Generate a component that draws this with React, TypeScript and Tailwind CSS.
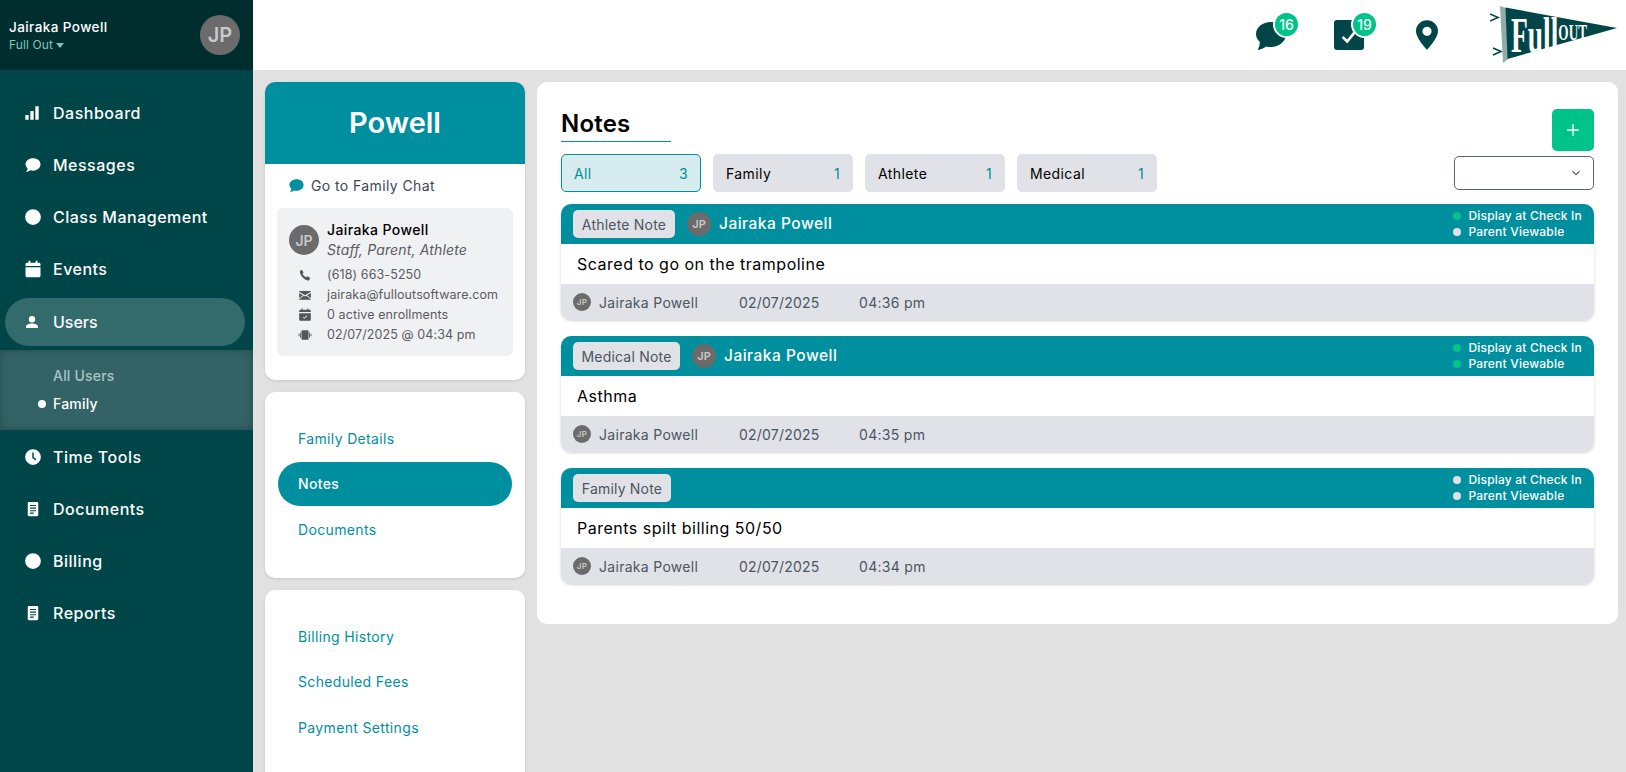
import React from "react";

const F = "font-['Inter','Noto_Sans',sans-serif]";

function Avatar({ size, text }: { size: string; text: string }) {
  return (
    <div className={`${size} flex shrink-0 items-center justify-center rounded-full bg-[#6b6b6b] font-semibold text-[#c9c9c9]`}>
      {text}
    </div>
  );
}

const I = ({ children, cls = "h-[18px] w-[18px]", box = "0 0 24 24" }: { children: React.ReactNode; cls?: string; box?: string }) => (
  <svg viewBox={box} className={`${cls} shrink-0`} fill="currentColor">{children}</svg>
);

const bubble = "M12 3C6.500 3 2 6.600 2 11c0 2.200 1.100 4.100 2.900 5.600-.2 1.700-1 3.200-2.200 4.400 2.300 0 4.400-.8 6-2 1 .3 2.200.5 3.300.5 5.500 0 10-3.600 10-8.500S17.500 3 12 3z";
const Doc = () => (
  <I>
    <path fillRule="evenodd" d="M6.500 2.500h11c.8 0 1.500.7 1.500 1.500v16c0 .8-.7 1.500-1.500 1.500h-11C5.700 21.500 5 20.800 5 20V4c0-.8.7-1.500 1.500-1.500zM8 6.500v1.500h8V6.500H8zm0 3.500v1.500h8V10H8zm0 3.500V15h8v-1.500H8zm0 3.300v1.400h5v-1.400H8z" />
  </I>
);

const items: { label: string; icon: React.ReactNode }[] = [
  { label: "Dashboard", icon: <I cls="h-[16px] w-[16px]"><path d="M2 15h5v7H2zM9.500 9h5v13h-5zM17 2h5v20h-5z" /></I> },
  { label: "Messages", icon: <I><path d={bubble} /></I> },
  { label: "Class Management", icon: <I><circle cx="12" cy="12" r="10.500" /></I> },
  { label: "Events", icon: <I><path d="M6 1h2.500v2.500h7V1H18v2.500h2c1.100 0 2 .9 2 2V8H2V5.500c0-1.100.9-2 2-2h2zM2 9.500h20V21c0 1.100-.9 2-2 2H4c-1.100 0-2-.9-2-2z" /></I> },
];
const items2: { label: string; icon: React.ReactNode }[] = [
  { label: "Time Tools", icon: <I><path fillRule="evenodd" d="M12 1.500a10.500 10.500 0 1 0 0 21 10.500 10.500 0 0 0 0-21zM11 6h2v6.200l3.500 2.600-1.200 1.600L11 13.200z" /></I> },
  { label: "Documents", icon: <Doc /> },
  { label: "Billing", icon: <I><circle cx="12" cy="12" r="10.500" /></I> },
  { label: "Reports", icon: <Doc /> },
];

function NavRow({ label, icon }: { label: string; icon: React.ReactNode }) {
  return (
    <div className="flex h-[52px] items-center pl-[24px] text-white">
      <span className="flex w-[29px]">{icon}</span>
      <span className="text-[16px] font-medium tracking-[0.5px]">{label}</span>
    </div>
  );
}

function Sidebar() {
  return (
    <aside className="flex h-[772px] w-[253px] shrink-0 flex-col bg-[#004548]">
      <div className="flex h-[70px] shrink-0 items-center justify-between bg-[#002e2f] pl-[9px] pr-[13px]">
        <div className="flex flex-col">
          <span className="text-[13.500px] font-medium leading-[20px] tracking-[0.42px] text-white">Jairaka Powell</span>
          <span className="flex items-center gap-[3px] text-[12px] leading-[16px] tracking-[0.1px] text-[#7fc4bd]">
            Full Out
            <span className="mt-[1px] h-0 w-0 border-x-[4.500px] border-t-[5px] border-x-transparent border-t-[#7fc4bd]" />
          </span>
        </div>
        <Avatar size="h-[40px] w-[40px] text-[20px]" text="JP" />
      </div>
      <nav className="flex flex-col pt-[17px]">
        {items.map((i) => <NavRow key={i.label} {...i} />)}
        <div className="ml-[5px] mr-[8px] mt-[3px] flex h-[48px] items-center rounded-[24px] bg-[#336a6c] pl-[19px] text-white">
          <span className="flex w-[29px]"><I cls="h-[16px] w-[16px]"><path d="M12 3a4.800 4.800 0 1 1 0 9.600A4.800 4.800 0 0 1 12 3zM3 21v-2c0-3 5-4.700 9-4.700s9 1.700 9 4.700v2z" /></I></span>
          <span className="text-[16px] font-medium">Users</span>
        </div>
        <div className="mt-[4px] flex h-[80px] flex-col justify-center bg-[#336366] pl-[53px] shadow-[inset_0_0_8px_rgba(0,0,0,0.25)]">
          <span className="text-[14px] font-medium leading-[28px] tracking-[0.2px] text-[#a9c3c3]">All Users</span>
          <span className="relative text-[14px] font-medium leading-[28px] tracking-[0.2px] text-white">
            <span className="absolute left-[-15px] top-[10px] h-[8px] w-[8px] rounded-full bg-white" />
            Family
          </span>
        </div>
        <div className="h-[1px]" />
        {items2.map((i) => <NavRow key={i.label} {...i} />)}
      </nav>
    </aside>
  );
}

function Badge({ n, top }: { n: number; top: string }) {
  return (
    <span className={`absolute left-[17px] ${top} flex h-[27px] w-[27px] items-center justify-center rounded-full border-2 border-white bg-[#00c389] text-[14px] font-medium text-white`}>{n}</span>
  );
}

function Topbar() {
  return (
    <header className="flex h-[70px] shrink-0 items-center justify-end bg-white text-[#004548]">
      <div className="relative mr-[48px] mt-[2px]">
        <svg viewBox="0 0 30 28" className="block h-[28px] w-[30px]" fill="currentColor"><path d="M15 0C6.700 0 0 5 0 12c0 3 1.400 5.800 3.800 7.800 0 2.800-.6 5.600-2.300 8.200 3.400-.4 6.300-1.800 8.500-3.600 1.600.4 3.300.6 5 .6 8.300 0 15-5.600 15-13S23.300 0 15 0z" /></svg>
        <Badge n={16} top="top-[-11px]" />
      </div>
      <div className="relative mr-[52px]">
        <div className="flex h-[30px] w-[30px] items-center justify-center rounded-[3px] bg-[#004548]">
          <svg viewBox="0 0 24 24" className="mt-[2px] h-[22px] w-[22px]" fill="none" stroke="white" strokeWidth="2.800"><path d="M5 13l5 5 9-11" /></svg>
        </div>
        <Badge n={19} top="top-[-9px]" />
      </div>
      <svg viewBox="0 0 24 32" className="mr-[52px] block h-[30px] w-[22px]" fill="currentColor"><path fillRule="evenodd" d="M12 0C5.400 0 0 5.200 0 11.800 0 19.500 12 32 12 32s12-12.500 12-20.200C24 5.200 18.600 0 12 0zm0 7a5 5 0 1 1 0 10 5 5 0 0 1 0-10z" /></svg>
      <svg viewBox="0 0 127 57" className="mr-[9px] mt-[-1px] block h-[57px] w-[127px]">
        <path d="M0 8l8 3.500-8 3.500M3 42l8 3.500-8 3.500" fill="none" stroke="#004548" strokeWidth="1.600" />
        <path d="M10 0l6 2 2 51-5 4z" fill="#8fadab" />
        <path d="M15.500 1.500L127 22 17.500 53z" fill="#004548" />
        <g transform="translate(21 46) scale(0.55 1)">
          <text fill="white" fontFamily="'Liberation Serif',serif" fontWeight="700" fontSize="50">
            Full
            <tspan fontSize="24" dy="-12">OUT</tspan>
          </text>
        </g>
      </svg>
    </header>
  );
}

function FamilyCard() {
  const Row = ({ icon, t }: { icon: React.ReactNode; t: string }) => (
    <div className="flex h-[20px] items-center text-[12.500px] tracking-[0.1px] text-[#5b5b5f]">
      <span className="flex w-[38px] justify-center pr-[6px] text-[#55555a]">{icon}</span>
      {t}
    </div>
  );
  return (
    <section className="h-[298px] shrink-0 overflow-hidden rounded-[10px] bg-white shadow-[0_1px_3px_rgba(0,0,0,0.12)]">
      <div className="flex h-[82px] items-center justify-center bg-[#008f9f] text-[29px] font-semibold text-white">Powell</div>
      <div className="mt-[11px] flex h-[20px] items-center pl-[23px] text-[14px] tracking-[0.4px] text-[#3d4657]">
        <span className="mr-[6px] flex text-[#008f9f]"><I cls="h-[17px] w-[17px]"><path d={bubble} /></I></span>
        Go to Family Chat
      </div>
      <div className="mx-[12px] mt-[13px] h-[148px] rounded-[6px] bg-[#f0f1f3] pl-[12px] pt-[12px]">
        <div className="flex items-center gap-[8px]">
          <Avatar size="h-[30px] w-[30px] text-[14px]" text="JP" />
          <div className="flex flex-col">
            <span className="text-[14px] font-medium leading-[20px] tracking-[0.4px] text-black">Jairaka Powell</span>
            <span className="text-[14px] italic leading-[20px] tracking-[0.15px] text-[#5b5b5f]">Staff, Parent, Athlete</span>
          </div>
        </div>
        <div className="mt-[5px] flex flex-col">
          <Row t="(618) 663-5250" icon={<I cls="h-[14px] w-[14px]"><path d="M6.600 3l3 4.500-1.800 2.500c1 2.200 3.500 4.800 6 6l2.500-1.800 4.500 3-1.500 3.500c-.5.8-1.500 1-2.500.8C9 19 4.800 13.500 3.200 7.200 3 6 3.300 5 4 4.500z" /></I>} />
          <Row t="jairaka@fulloutsoftware.com" icon={<I cls="h-[14px] w-[14px]"><path d="M2 5h20v1.500l-10 6-10-6zM2 8.500l6.500 4L2 17.500zM22 8.500v9l-6.500-5zM9.800 13.300l2.200 1.300 2.200-1.300 7.800 6V20H2v-.7z" /></I>} />
          <Row t="0 active enrollments" icon={<I cls="h-[14px] w-[14px]"><path fillRule="evenodd" d="M6 1h2v2h8V1h2v2h2c1 0 2 1 2 2v2H2V5c0-1 1-2 2-2h2zM2 9h20v11c0 1-1 2-2 2H4c-1 0-2-1-2-2zm6.500 7l2.500 2.500 5-5-1-1-4 4-1.500-1.500z" /></I>} />
          <Row t="02/07/2025 @ 04:34 pm" icon={<I cls="h-[14px] w-[14px]"><path d="M7 4h10c.6 0 1 .4 1 1v14c0 .6-.4 1-1 1H7c-.6 0-1-.4-1-1V5c0-.6.4-1 1-1zM3.500 7.500H5v9H3.500zM19 7.500h1.500v9H19zM1 10h1.500v4H1zM21.500 10H23v4h-1.500z" /></I>} />
        </div>
      </div>
    </section>
  );
}

function LinkCard({ links, h, active }: { links: string[]; h: string; active?: string }) {
  return (
    <section className={`${h} flex shrink-0 flex-col gap-[1px] overflow-hidden rounded-[10px] bg-white px-[13px] pt-[24px] shadow-[0_1px_3px_rgba(0,0,0,0.12)]`}>
      {links.map((l) => (
        <div key={l} className={`flex h-[44.500px] shrink-0 items-center rounded-[22px] pl-[20px] text-[14px] tracking-[0.35px] ${l === active ? "bg-[#008f9f] font-medium text-white" : "text-[#008f9f]"}`}>
          {l}
        </div>
      ))}
    </section>
  );
}

function Tab({ label, n, active }: { label: string; n: number; active?: boolean }) {
  return (
    <div className={`flex h-[38px] w-[140px] items-center justify-between rounded-[5px] border px-[12px] text-[14px] tracking-[0.4px] ${active ? "border-[#008f9f] bg-[#d6ecee] text-[#008f9f]" : "border-[#e1e2e7] bg-[#e1e2e7] text-black"}`}>
      <span>{label}</span>
      <span className="text-[#008f9f]">{n}</span>
    </div>
  );
}

function Note({ type, who, text, time, green, green2, tagW }: { type: string; who?: boolean; text: string; time: string; green: boolean; green2?: boolean; tagW: string }) {
  return (
    <article className="overflow-hidden rounded-[10px] bg-white shadow-[0_1px_3px_rgba(0,0,0,0.18)]">
      <div className="flex h-[40px] items-center justify-between bg-[#008f9f] pl-[12px] pr-[12px] text-white">
        <div className="flex items-center gap-[12px]">
          <span className={`flex h-[28px] ${tagW} items-center justify-center rounded-[5px] bg-[#e1e2e7] text-[14px] tracking-[0.2px] text-[#4b5563]`}>{type}</span>
          {who && <Avatar size="h-[24px] w-[24px] text-[11px]" text="JP" />}
          {who && <span className="-ml-[4px] text-[15.500px] font-medium tracking-[0.5px]">Jairaka Powell</span>}
        </div>
        <div className="flex flex-col text-[12px] font-medium leading-[16px] tracking-[0.2px]">
          <span className="flex items-center gap-[7px]"><span className={`h-[8px] w-[8px] rounded-full ${green ? "bg-[#00c389]" : "bg-[#e1e2e7]"}`} />Display at Check In</span>
          <span className="flex items-center gap-[7px]"><span className={`h-[8px] w-[8px] rounded-full ${green2 ? "bg-[#00c389]" : "bg-[#e1e2e7]"}`} />Parent Viewable</span>
        </div>
      </div>
      <div className="flex h-[40px] items-center pl-[16px] text-[16px] tracking-[0.5px] text-black">{text}</div>
      <div className="flex h-[36px] items-center bg-[#e1e2e7] pl-[12px] text-[14px] tracking-[0.3px] text-[#4b5563]">
        <Avatar size="h-[18px] w-[18px] text-[8px]" text="JP" />
        <span className="ml-[8px] w-[140px]">Jairaka Powell</span>
        <span className="w-[120px] tracking-[0.2px]">02/07/2025</span>
        <span>{time}</span>
      </div>
    </article>
  );
}

export default function App() {
  return (
    <div className={`flex h-[772px] w-[1626px] overflow-hidden bg-[#e1e1e1] ${F}`}>
      <Sidebar />
      <div className="flex min-w-0 flex-1 flex-col">
        <Topbar />
        <div className="flex gap-[12px] pl-[12px] pr-[8px] pt-[12px]">
          <div className="flex w-[260px] shrink-0 flex-col gap-[12px]">
            <FamilyCard />
            <LinkCard links={["Family Details", "Notes", "Documents"]} active="Notes" h="h-[186px]" />
            <LinkCard links={["Billing History", "Scheduled Fees", "Payment Settings"]} h="h-[200px]" />
          </div>
          <main className="h-[542px] flex-1 rounded-[10px] bg-white px-[24px] pt-[27px]">
            <div className="flex items-start justify-between">
              <div className="w-[110px] border-b border-[#008f9f] pb-[2px] text-[24px] font-semibold leading-[30px] tracking-[0.2px] text-black">Notes</div>
              <div className="flex h-[42px] w-[42px] items-center justify-center rounded-[5px] bg-[#00c389] text-white">
                <svg viewBox="0 0 24 24" className="h-[20px] w-[20px]" fill="none" stroke="currentColor" strokeWidth="1.600"><path d="M12 5v14M5 12h14" /></svg>
              </div>
            </div>
            <div className="mt-[3px] flex items-center justify-between">
              <div className="flex gap-[12px]">
                <Tab label="All" n={3} active />
                <Tab label="Family" n={1} />
                <Tab label="Athlete" n={1} />
                <Tab label="Medical" n={1} />
              </div>
              <div className="flex h-[34px] w-[140px] items-center justify-end rounded-[5px] border border-[#5b6270] pr-[10px] text-[#5b6270]">
                <svg viewBox="0 0 24 24" className="h-[14px] w-[14px]" fill="none" stroke="currentColor" strokeWidth="2"><path d="M6 9l6 6 6-6" /></svg>
              </div>
            </div>
            <div className="mt-[12px] flex flex-col gap-[16px]">
              <Note type="Athlete Note" who text="Scared to go on the trampoline" time="04:36 pm" green tagW="w-[102px]" />
              <Note type="Medical Note" who text="Asthma" time="04:35 pm" green green2 tagW="w-[107px]" />
              <Note type="Family Note" text="Parents spilt billing 50/50" time="04:34 pm" green={false} tagW="w-[98px]" />
            </div>
          </main>
        </div>
      </div>
    </div>
  );
}
